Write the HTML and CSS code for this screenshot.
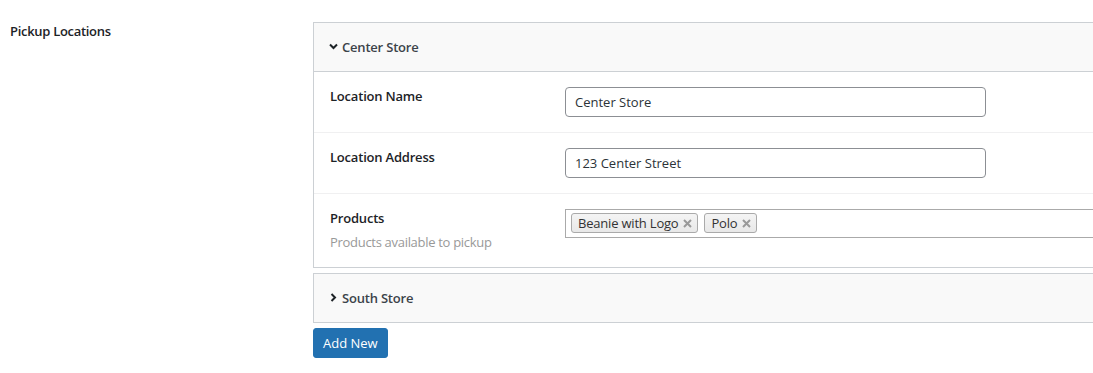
FILE: index.html
```html
<!DOCTYPE html>
<html lang="en">
<head>
    <title>Pickup Locations</title>
    <link rel="stylesheet" href="styles.css">
</head>
<body>
    <div class="settings-row">
        <div class="row-title">Pickup Locations</div>
        <div class="row-field">
            <div class="location-panel">
                <div class="panel-head">
                    <svg class="chev" width="9" height="7" viewBox="0 0 9 7"><path d="M1 1.5 L4.5 5 L8 1.5" fill="none" stroke="#1d2327" stroke-width="2"/></svg>
                    Center Store
                </div>
                <div class="panel-row">
                    <div class="field-label">Location Name</div>
                    <input class="text-input" type="text" value="Center Store">
                </div>
                <div class="panel-row">
                    <div class="field-label">Location Address</div>
                    <input class="text-input" type="text" value="123 Center Street">
                </div>
                <div class="panel-row last">
                    <div class="field-label">
                        Products
                        <div class="field-desc">Products available to pickup</div>
                    </div>
                    <div class="tag-box">
                        <span class="tag">Beanie with Logo <svg class="tag-x" width="9" height="9" viewBox="0 0 9 9"><path d="M1 1 L8 8 M8 1 L1 8" stroke="#999" stroke-width="2"/></svg></span>
                        <span class="tag">Polo <svg class="tag-x" width="9" height="9" viewBox="0 0 9 9"><path d="M1 1 L8 8 M8 1 L1 8" stroke="#999" stroke-width="2"/></svg></span>
                    </div>
                </div>
            </div>
            <div class="location-panel closed">
                <div class="panel-head">
                    <svg class="chev" width="9" height="9" viewBox="0 0 9 9"><path d="M2.5 1 L6 4.5 L2.5 8" fill="none" stroke="#1d2327" stroke-width="2"/></svg>
                    South Store
                </div>
            </div>
            <button class="add-btn">Add New</button>
        </div>
    </div>
</body>
</html>
```
FILE: styles.css
```css
body {
    margin: 0;
    background: #fff;
    font-family: "Open Sans", "Noto Sans", sans-serif;
    font-size: 13px;
    line-height: 18px;
    color: #1d2327;
    overflow: hidden;
}
.settings-row {
    display: flex;
}
.row-title {
    flex-shrink: 0;
    width: 303px;
    padding: 22px 0 0 10px;
    font-weight: 600;
    letter-spacing: -0.3px;
}
.row-field {
    flex-shrink: 0;
    padding-top: 22px;
}
.location-panel {
    width: 820px;
    border: 1px solid #ccd0d4;
    margin-bottom: 5px;
}
.panel-head {
    display: flex;
    align-items: center;
    gap: 4px;
    background: #f9f9f9;
    padding: 15px;
    font-weight: 600;
    color: #3c434a;
    letter-spacing: -0.2px;
}
.location-panel .panel-head {
    border-bottom: 1px solid #ccd0d4;
}
.location-panel.closed .panel-head {
    border-bottom: none;
}
.chev {
    margin-top: -2px;
}
.panel-row {
    display: flex;
    padding: 15px 0 15px 16px;
    border-bottom: 1px solid #f0f0f1;
}
.panel-row.last {
    border-bottom: none;
}
.field-label {
    width: 235px;
    font-weight: 600;
    letter-spacing: -0.2px;
}
.field-desc {
    margin: 6px 0 1px;
    font-weight: 400;
    color: #999;
    letter-spacing: -0.3px;
}
.text-input {
    width: 421px;
    height: 30px;
    box-sizing: border-box;
    border: 1px solid #8c8f94;
    border-radius: 4px;
    padding: 0 9px;
    font: inherit;
    color: #2c3338;
}
.tag-box {
    width: 560px;
    height: 29px;
    box-sizing: border-box;
    border: 1px solid #aaa;
    padding: 3px 5px;
    display: flex;
    gap: 6px;
}
.tag {
    display: inline-flex;
    align-items: center;
    gap: 5px;
    height: 20px;
    box-sizing: border-box;
    padding: 0 5px 0 6px;
    border: 1px solid #aaa;
    border-radius: 3px;
    background: linear-gradient(#f4f4f4, #e8e8e8);
    color: #333;
    line-height: 17px;
    letter-spacing: -0.2px;
}
.tag-x {
    display: block;
}
.add-btn {
    display: block;
    height: 30px;
    padding: 0 9px;
    background: #2271b1;
    border: 1px solid #2271b1;
    border-radius: 3px;
    color: #fff;
    font: inherit;
    cursor: pointer;
}
```
